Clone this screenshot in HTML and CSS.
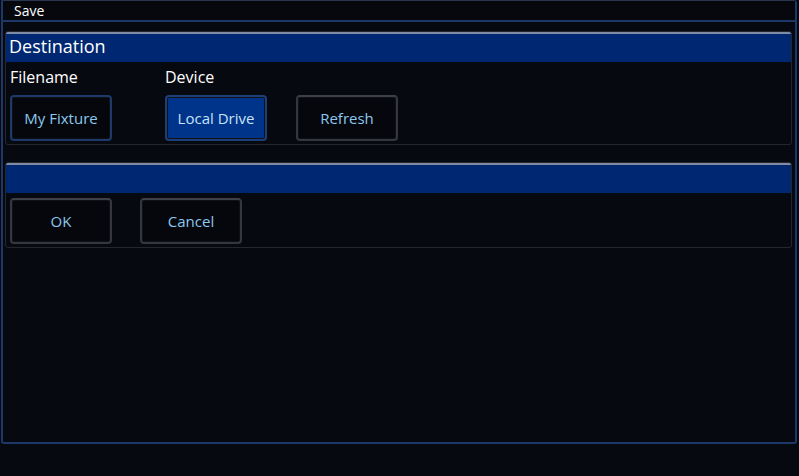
FILE: index.html
```html
<!DOCTYPE html>
<html>
<head>
<meta charset="utf-8">
<link rel="stylesheet" href="styles.css">
</head>
<body>
<div class="window">
  <div class="titlebar">Save</div>
  <div class="content">
    <section class="panel panel-dest">
      <div class="panel-header">Destination</div>
      <div class="panel-body">
        <div class="field">
          <div class="label">Filename</div>
          <button class="btn btn-input">My Fixture</button>
        </div>
        <div class="field field-device">
          <div class="label">Device</div>
          <div class="btn-row">
            <button class="btn btn-active">Local Drive</button>
            <button class="btn">Refresh</button>
          </div>
        </div>
      </div>
    </section>
    <section class="panel panel-actions">
      <div class="panel-header"></div>
      <div class="panel-body actions">
        <button class="btn">OK</button>
        <button class="btn">Cancel</button>
      </div>
    </section>
  </div>
</div>
</body>
</html>
```

FILE: styles.css
```css
html, body {
  margin: 0;
  padding: 0;
  background: #070910;
  font-family: "Open Sans", "Noto Sans", sans-serif;
}

.window {
  box-sizing: border-box;
  margin-left: 1px;
  width: 796px;
  height: 444px;
  border: 2px solid #1c3768;
  border-top: 1px solid #2a3550;
  border-radius: 0 3px 3px 3px;
  background: #070910;
}

.titlebar {
  height: 19px;
  border-bottom: 2px solid #1c3768;
  color: #ffffff;
  font-size: 14px;
  line-height: 19px;
  padding-left: 11px;
  background: #06080e;
}

.content {
  padding: 9px 3px 0 2px;
  display: flex;
  flex-direction: column;
  gap: 17px;
}

.panel {
  border: 1px solid #24272e;
  border-radius: 3px;
  overflow: hidden;
}

.panel-header {
  height: 28px;
  background: #002872;
  border-top: 2px solid #7f8ca3;
  color: #ffffff;
  font-size: 18px;
  line-height: 25px;
  padding-left: 3px;
}

.panel-body {
  display: flex;
  padding: 6px 4px 3px 4px;
}

.field {
  display: flex;
  flex-direction: column;
}

.field-device {
  margin-left: 53px;
}

.label {
  color: #ffffff;
  font-size: 16px;
  line-height: 18px;
  height: 27px;
}

.btn-row {
  display: flex;
  gap: 29px;
}

.btn {
  box-sizing: border-box;
  width: 102px;
  height: 46px;
  background: #05070c;
  border: 2px solid #34373e;
  border-top-color: #3d4048;
  border-radius: 4px;
  color: #8cc8ee;
  font-family: "Open Sans", "Noto Sans", sans-serif;
  font-size: 15px;
  padding: 0;
  box-shadow: inset 0 0 0 1px #0f1116;
}

.btn-input {
  border-color: #1d3a6a;
}

.btn-active {
  background: #00348a;
  border-color: #1d3f78;
  color: #c8e2f8;
}

.actions {
  gap: 28px;
  padding: 5px 4px 3px 4px;
}
```
